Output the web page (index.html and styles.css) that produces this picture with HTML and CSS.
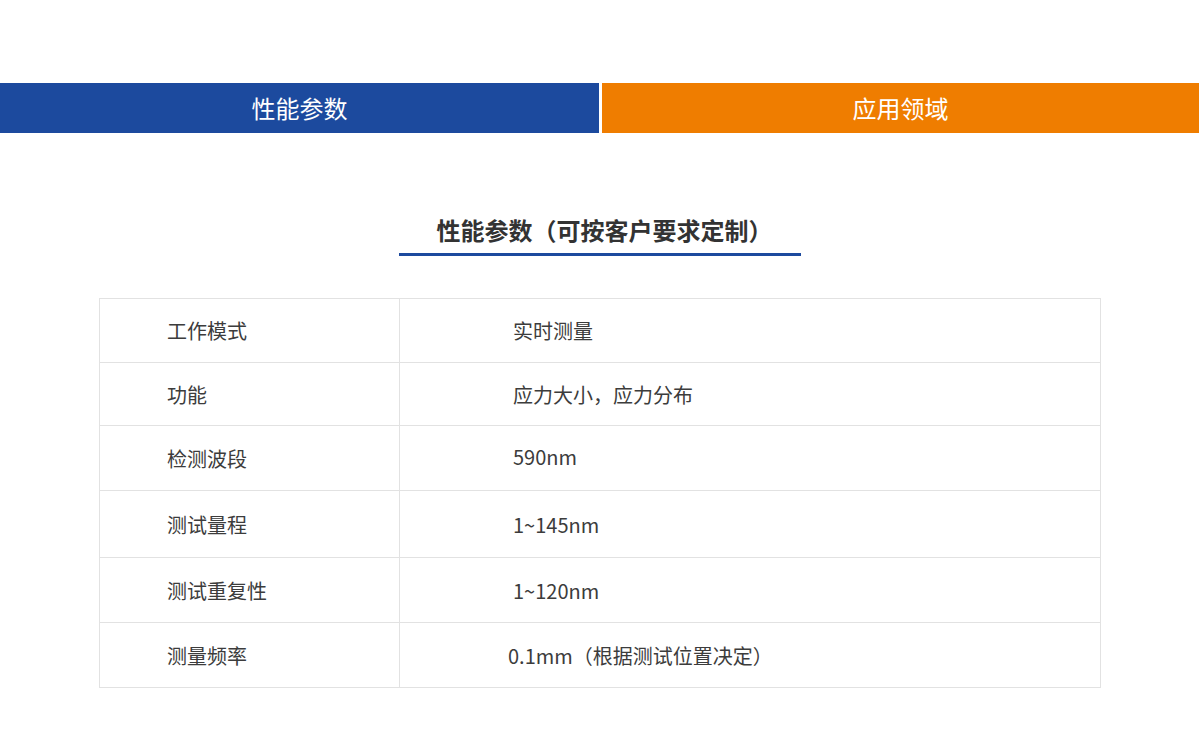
FILE: index.html
```html
<!DOCTYPE html>
<html lang="zh-CN">
<head>
<meta charset="utf-8">
<title>性能参数</title>
<link rel="stylesheet" href="styles.css">
</head>
<body>
<nav class="tabs">
  <div class="tab tab-blue">性能参数</div>
  <div class="tab tab-orange">应用领域</div>
</nav>
<section class="params">
  <div class="title-wrap">
    <h2 class="title">性能参数（可按客户要求定制）</h2>
  </div>
  <div class="spec">
    <div class="row r1"><div class="k">工作模式</div><div class="v">实时测量</div></div>
    <div class="row r2"><div class="k">功能</div><div class="v">应力大小，应力分布</div></div>
    <div class="row r3"><div class="k">检测波段</div><div class="v v-up">590nm</div></div>
    <div class="row r4"><div class="k">测试量程</div><div class="v">1~145nm</div></div>
    <div class="row r5"><div class="k">测试重复性</div><div class="v">1~120nm</div></div>
    <div class="row r6"><div class="k">测量频率</div><div class="v v-left">0.1mm（根据测试位置决定）</div></div>
  </div>
</section>
</body>
</html>
```
FILE: styles.css
```css
* { box-sizing: border-box; }
html, body { margin: 0; padding: 0; background: #fff; }
body {
  font-family: "Noto Sans CJK SC", "Noto Sans", sans-serif;
  color: #333;
  width: 1199px;
}
.tabs {
  margin-top: 83px;
  display: flex;
  gap: 3px;
  height: 50px;
}
.tab {
  display: flex;
  align-items: center;
  justify-content: center;
  color: #fff;
  font-size: 24px;
  line-height: 1;
}
.tab-blue { width: 599px; background: #1c4a9e; }
.tab-orange { flex: 1; background: #ef7d00; }

.params { padding-top: 79px; }
.title-wrap { display: flex; justify-content: center; }
.title {
  margin: 0;
  width: 402px;
  text-align: center;
  font-size: 24px;
  font-weight: 700;
  line-height: 36px;
  padding-bottom: 5px;
  padding-left: 10px;
  color: #333;
  border-bottom: 3px solid #1c4a9e;
}
.spec {
  margin: 42px 0 0 99px;
  width: 1002px;
  border: 1px solid #e2e2e2;
  border-bottom: 0;
}
.row {
  display: flex;
  border-bottom: 1px solid #e2e2e2;
  font-size: 20px;
  color: #3c3c3c;
}
.k {
  width: 300px;
  border-right: 1px solid #e2e2e2;
  padding-left: 67px;
  display: flex;
  align-items: center;
}
.v {
  flex: 1;
  padding-left: 113px;
  display: flex;
  align-items: center;
}
.v-up { padding-bottom: 4px; }
.v-left { padding-left: 108px; }
.r1 { height: 64px; }
.r2 { height: 63px; }
.r3 { height: 65px; }
.r4 { height: 67px; }
.r5 { height: 65px; }
.r6 { height: 65px; }
```
